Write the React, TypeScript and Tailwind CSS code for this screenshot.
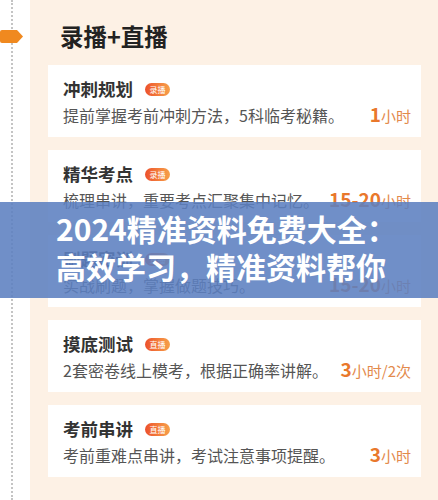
import React from 'react';

const font = { fontFamily: '"Noto Sans CJK SC", "Noto Sans", sans-serif' };

type Course = {
  title: string;
  badge: string;
  desc: string;
  num: string;
  unit: string;
};

const courses: Course[] = [
  { title: '冲刺规划', badge: '录播', desc: '提前掌握考前冲刺方法，5科临考秘籍。', num: '1', unit: '小时' },
  { title: '精华考点', badge: '录播', desc: '梳理串讲，重要考点汇聚集中记忆。', num: '15-20', unit: '小时' },
  { title: '刷题密训', badge: '直播', desc: '实战刷题，掌握做题技巧。', num: '15-20', unit: '小时' },
  { title: '摸底测试', badge: '直播', desc: '2套密卷线上模考，根据正确率讲解。', num: '3', unit: '小时/2次' },
  { title: '考前串讲', badge: '直播', desc: '考前重难点串讲，考试注意事项提醒。', num: '3', unit: '小时' },
];

function Marker() {
  return (
    <svg width="23" height="13" viewBox="0 0 23 13" className="block">
      <path d="M2 0 H17 L23 6.5 L17 13 H2 Q0 13 0 11 V2 Q0 0 2 0 Z" fill="#f0891f" />
    </svg>
  );
}

function CourseCard({ c }: { c: Course }) {
  return (
    <div className="h-[72px] bg-white pl-[15px] pr-[10px] pt-[13px]">
      <div className="flex items-center h-[22px]">
        <span className="text-[17.5px] font-bold text-[#333] leading-[22px]">{c.title}</span>
        <span className="ml-[12px] h-[13px] w-[25px] rounded-full bg-gradient-to-r from-[#ec4f2c] to-[#f6a04a] text-white text-[8px] leading-[13px] text-center">
          {c.badge}
        </span>
      </div>
      <div className="mt-[4px] flex items-center justify-between h-[22px]">
        <span className="text-[16px] text-[#555] leading-[22px] whitespace-nowrap">{c.desc}</span>
        <span className="flex items-baseline text-[#e9782c] whitespace-nowrap leading-[22px]">
          <span className="text-[19px] font-bold">{c.num}</span>
          <span className="text-[15px] text-[#e38a4c]">{c.unit}</span>
        </span>
      </div>
    </div>
  );
}

export default function App() {
  return (
    <div className="relative w-[438px] h-[500px] overflow-hidden flex bg-white" style={font}>
      <div className="relative w-[30px] h-full shrink-0">
        <div className="absolute left-[11px] top-0 h-full w-0 border-l-2 border-dotted border-[#c4c4c4]" />
        <div className="absolute left-0 top-[30px]">
          <Marker />
        </div>
      </div>
      <div className="flex-1 h-full bg-[#fdf1e5] pl-[18px] pr-[17px] pt-[24px]">
        <div className="pl-[12px] text-[23.5px] font-bold text-[#222] leading-[24px]">录播+直播</div>
        <div className="mt-[17px] flex flex-col gap-[13px]">
          {courses.map(c => (
            <CourseCard key={c.title} c={c} />
          ))}
        </div>
      </div>

      {/* overlay banner */}
      <div className="absolute left-0 top-[202px] w-full h-[96px] bg-[#5c80c0]/[0.88] pl-[56px] pt-[7px]">
        <div className="text-white font-bold text-[30px] leading-[38px] whitespace-nowrap">2024精准资料免费大全：</div>
        <div className="text-white font-bold text-[30px] leading-[38px] whitespace-nowrap">高效学习，精准资料帮你</div>
      </div>
    </div>
  );
}
